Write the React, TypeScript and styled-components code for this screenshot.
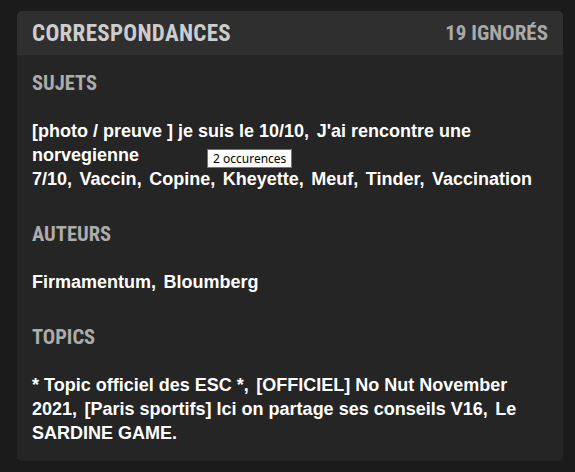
import React from 'react';
import styled, { createGlobalStyle } from 'styled-components';

const GlobalStyle = createGlobalStyle`
	html, body {
		margin: 0;
		padding: 0;
		background: #1b1b1b;
	}
	body {
		font-family: 'Liberation Sans', Arial, sans-serif;
	}
`;

const condensed = `'Roboto Condensed', 'Liberation Sans Narrow', 'DejaVu Sans Condensed', Roboto, sans-serif`;

const Page = styled.div`
	padding: 11px 12px 12px 17px;
`;

const Card = styled.section`
	width: 546px;
	background: #252525;
	border-radius: 5px;
	overflow: hidden;
	padding-bottom: 1px;
`;

const Header = styled.header`
	display: flex;
	justify-content: space-between;
	align-items: center;
	height: 44px;
	padding: 0 15px;
	background: #2f2f2f;
	font-family: ${condensed};
	font-weight: 700;
	text-transform: uppercase;
`;

const Title = styled.span<{ $muted?: boolean }>`
	color: ${p => (p.$muted ? '#a9a9a9' : '#cdcdcd')};
	font-size: ${p => (p.$muted ? '21px' : '23px')};
	letter-spacing: ${p => (p.$muted ? '0' : '0.3px')};
`;

const Section = styled.div`
	padding: 17px 15px 0;
`;

const SectionTitle = styled.h3`
	margin: 0;
	line-height: 22px;
	font-family: ${condensed};
	font-weight: 700;
	font-size: 20.5px;
	color: #acacac;
	text-transform: uppercase;
`;

const List = styled.p`
	position: relative;
	margin: 25px 0 15px;
	font-weight: 700;
	font-size: 18px;
	line-height: 24px;
	color: #ffffff;
`;

const Item = styled.span<{ $last?: boolean }>`
	margin-right: ${p => (p.$last ? '0' : '2.5px')};
`;

const Tooltip = styled.span`
	position: absolute;
	left: 175px;
	top: 30px;
	height: 17px;
	padding: 0 5px;
	background: #ffffff;
	border: 1px solid #767676;
	color: #000;
	font-family: 'Noto Sans', 'Open Sans', sans-serif;
	font-weight: 400;
	font-size: 12px;
	line-height: 17px;
	white-space: nowrap;
`;

const sections = [
	{
		title: 'Sujets',
		items: ['[photo / preuve ] je suis le 10/10', "J'ai rencontre une norvegienne\n7/10", 'Vaccin', 'Copine', 'Kheyette', 'Meuf', 'Tinder', 'Vaccination'],
		tooltip: '2 occurences'
	},
	{ title: 'Auteurs', items: ['Firmamentum', 'Bloumberg'] },
	{
		title: 'Topics',
		items: ['* Topic officiel des ESC *', '[OFFICIEL] No Nut November 2021', '[Paris sportifs] Ici on partage ses conseils V16', 'Le SARDINE GAME.']
	}
];

const App = () => (
	<Page>
		<GlobalStyle/>
		<Card>
			<Header>
				<Title>Correspondances</Title>
				<Title $muted>19 ignorés</Title>
			</Header>
			{sections.map(s => (
				<Section key={s.title}>
					<SectionTitle>{s.title}</SectionTitle>
					<List>
						{s.items.map((item, i) => {
							const last = i === s.items.length - 1;
							const parts = item.split('\n');
							return (
								<Item key={item} $last={last}>
									{parts.map((p, j) => (
										<React.Fragment key={j}>
											{j > 0 && <br/>}
											{p}
										</React.Fragment>
									))}
									{!last && ','}
								</Item>
							);
						}).reduce<React.ReactNode[]>((acc, el, i) => (i ? [...acc, ' ', el] : [el]), [])}
						{s.tooltip && <Tooltip>{s.tooltip}</Tooltip>}
					</List>
				</Section>
			))}
		</Card>
	</Page>
);

export default App;
